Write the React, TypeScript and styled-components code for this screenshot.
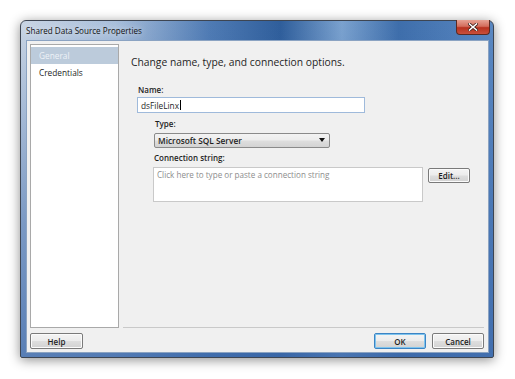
import styled, { createGlobalStyle } from 'styled-components'

const GlobalStyle = createGlobalStyle`
  html, body { margin: 0; padding: 0; background: #ffffff; }
  body { font-family: "Open Sans", "Noto Sans", sans-serif; color: #1e1e1e; }
`

const Page = styled.div`
  width: 515px;
  height: 379px;
  padding: 20px 0 0 20px;
  box-sizing: border-box;
`

const Window = styled.div`
  width: 474px;
  height: 338px;
  box-sizing: border-box;
  border: 1px solid #3d4552;
  border-radius: 6px 6px 2px 2px;
  box-shadow: 0 2px 12px rgba(0, 0, 0, 0.45);
  padding: 0 4px 4px 5px;
  display: flex;
  flex-direction: column;
  background:
    linear-gradient(180deg, rgba(255, 255, 255, 0) 0%, rgba(60, 105, 170, 0.55) 60%, rgba(60, 105, 170, 0.8) 100%),
    linear-gradient(90deg, #c9d5e4 0%, #a9bfdb 20%, #4f7bb4 40%, #2f5e9b 55%, #7ba2cf 68%, #3e6eab 80%, #5a88c2 100%);
`

const TitleBar = styled.div`
  height: 19px;
  display: flex;
  align-items: center;
  justify-content: space-between;
  margin-right: -1px;
`

const Title = styled.span`
  font-size: 8.1px;
  color: #111;
  text-shadow: 0 0 6px rgba(255, 255, 255, 0.9);
`

const CloseButton = styled.div`
  align-self: flex-start;
  margin-top: -1px;
  width: 34px;
  height: 15px;
  box-sizing: border-box;
  border: 1px solid #5a2a22;
  border-top: none;
  border-radius: 0 0 4px 4px;
  background: linear-gradient(180deg, #e7a293 0%, #d36d5c 45%, #b8321f 55%, #c9503b 100%);
  display: flex;
  align-items: center;
  justify-content: center;
`

const Client = styled.div`
  flex: 1;
  box-sizing: border-box;
  border: 1px solid #8ba3c2;
  background: #f0f0f0;
  padding: 3px 4px 3px 3px;
  display: flex;
  flex-direction: column;
`

const Body = styled.div`
  height: 284px;
  display: flex;
  gap: 4px;
`

const Sidebar = styled.div`
  width: 89px;
  box-sizing: border-box;
  border: 1px solid #a9a9a9;
  background: #fff;
  padding-top: 2px;
`

const NavItem = styled.div<{ $active?: boolean }>`
  height: 17px;
  line-height: 17px;
  padding-left: 8px;
  font-size: 8.3px;
  color: ${(p) => (p.$active ? '#eef2f7' : '#1e1e1e')};
  background: ${(p) => (p.$active ? '#bccbdb' : 'transparent')};
`

const Main = styled.div`
  flex: 1;
  border-bottom: 1px solid #c9c9c9;
  padding: 11px 0 0 8px;
  display: flex;
  flex-direction: column;
`

const Heading = styled.div`
  font-size: 10.3px;
  line-height: 14px;
  color: #1e1e1e;
  margin-bottom: 15px;
`

const Field = styled.div<{ $indent?: number }>`
  display: flex;
  flex-direction: column;
  gap: 2px;
  margin-left: ${(p) => p.$indent ?? 6}px;
  margin-bottom: 4.5px;
`

const Label = styled.label`
  font-size: 8px;
  line-height: 11px;
  font-weight: 600;
  color: #1e1e1e;
  padding-left: 1px;
`

const TextBox = styled.div`
  width: 228px;
  height: 16px;
  box-sizing: border-box;
  border: 1px solid #9fbadb;
  background: #fff;
  display: flex;
  align-items: center;
  padding-left: 3px;
  font-size: 8.3px;
  color: #1e1e1e;
`

const Caret = styled.span`
  width: 1px;
  height: 10px;
  background: #000;
  margin-left: 1px;
`

const Select = styled.div`
  width: 176px;
  height: 15px;
  margin-top: 2px;
  box-sizing: border-box;
  border: 1px solid #8a8a8a;
  border-radius: 2px;
  background: linear-gradient(180deg, #f3f3f3 0%, #ececec 48%, #dedede 52%, #d3d3d3 100%);
  display: flex;
  align-items: center;
  justify-content: space-between;
  padding: 0 4px 0 3px;
  font-size: 8.3px;
  font-weight: 600;
  color: #1e1e1e;
`

const ConnRow = styled.div`
  display: flex;
  align-items: flex-start;
  gap: 5px;
  margin-top: 2px;
`

const TextArea = styled.div`
  width: 270px;
  height: 35px;
  box-sizing: border-box;
  border: 1px solid #c9c9c9;
  background: #fff;
  padding: 1px 3px;
  font-size: 8.1px;
  line-height: 11px;
  color: #8d8d8d;
`

const Button = styled.button<{ $w: number; $default?: boolean }>`
  width: ${(p) => p.$w}px;
  height: ${(p) => (p.$w < 45 ? 15 : 16)}px;
  box-sizing: border-box;
  padding: 0;
  border: 1px solid ${(p) => (p.$default ? '#3c84c4' : '#7a7a7a')};
  border-radius: 2px;
  box-shadow: ${(p) => (p.$default ? 'inset 0 0 0 1px #7ec4ee' : 'inset 0 0 0 1px #fbfbfb')};
  background: linear-gradient(180deg, #f4f4f4 0%, #ececec 48%, #dedede 52%, #d2d2d2 100%);
  font-family: "Open Sans", "Noto Sans", sans-serif;
  font-size: 8px;
  font-weight: 600;
  color: #1e1e1e;
  margin-top: 1px;
`

const Footer = styled.div`
  margin-top: 5px;
  height: 16px;
  display: flex;
  justify-content: space-between;
`

const ButtonGroup = styled.div`
  display: flex;
  gap: 6px;
`

const FooterButton = styled(Button)`
  margin-top: 0;
`

export default function App() {
  return (
    <Page>
      <GlobalStyle />
      <Window>
        <TitleBar>
          <Title>Shared Data Source Properties</Title>
          <CloseButton>
            <svg width="10" height="8" viewBox="0 0 10 8">
              <path d="M1.5 1 L8.5 7 M8.5 1 L1.5 7" stroke="#3a1a14" strokeWidth="3" strokeLinecap="square" />
              <path d="M1.5 1 L8.5 7 M8.5 1 L1.5 7" stroke="#ffffff" strokeWidth="1.6" strokeLinecap="square" />
            </svg>
          </CloseButton>
        </TitleBar>
        <Client>
          <Body>
            <Sidebar>
              <NavItem $active>General</NavItem>
              <NavItem>Credentials</NavItem>
            </Sidebar>
            <Main>
              <Heading>Change name, type, and connection options.</Heading>
              <Field>
                <Label>Name:</Label>
                <TextBox>
                  dsFileLinx
                  <Caret />
                </TextBox>
              </Field>
              <Field $indent={23}>
                <Label>Type:</Label>
                <Select>
                  Microsoft SQL Server
                  <svg width="6" height="4" viewBox="0 0 6 4">
                    <path d="M0 0 H6 L3 4 Z" fill="#111" />
                  </svg>
                </Select>
              </Field>
              <Field $indent={22}>
                <Label>Connection string:</Label>
                <ConnRow>
                  <TextArea>Click here to type or paste a connection string</TextArea>
                  <Button $w={42}>Edit...</Button>
                </ConnRow>
              </Field>
            </Main>
          </Body>
          <Footer>
            <FooterButton $w={53}>Help</FooterButton>
            <ButtonGroup>
              <FooterButton $w={52} $default>OK</FooterButton>
              <FooterButton $w={52}>Cancel</FooterButton>
            </ButtonGroup>
          </Footer>
        </Client>
      </Window>
    </Page>
  )
}
